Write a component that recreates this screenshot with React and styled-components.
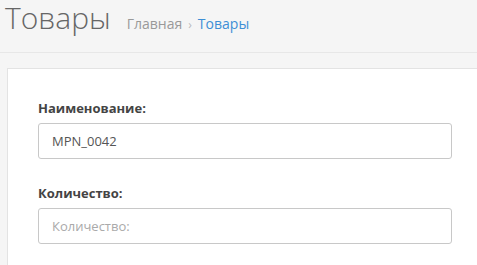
import React from "react";
import styled, { createGlobalStyle } from "styled-components";

const Global = createGlobalStyle`
  html, body { margin: 0; padding: 0; background: #f5f5f5; overflow: hidden; }
  body { font-family: "Open Sans", "Liberation Sans", sans-serif; color: #333; }
`;

const Page = styled.div`
  width: 477px;
  height: 265px;
  overflow: hidden;
`;

const Header = styled.div`
  display: flex;
  align-items: baseline;
  gap: 16px;
  height: 53px;
  box-sizing: border-box;
  padding: 0 0 0 5px;
  border-bottom: 1px solid #e7e7e7;
`;

const Title = styled.h1`
  margin: 0;
  font-size: 30px;
  font-weight: 300;
  line-height: 36px;
  color: #666;
`;

const Crumbs = styled.div`
  display: flex;
  align-items: baseline;
  gap: 6px;
  font-size: 14px;
  color: #999;
`;

const Crumb = styled.a`
  color: ${(p) => (p.$active ? "#3d8fd6" : "#999")};
  text-decoration: none;
`;

const Sep = styled.span`
  color: #bbb;
  font-size: 12px;
`;

const Content = styled.div`
  padding: 15px 0 0 7px;
`;

const Card = styled.div`
  width: 476px;
  box-sizing: border-box;
  background: #fff;
  border: 1px solid #e3e3e3;
  padding: 30px;
`;

const Group = styled.div`
  margin-bottom: 25px;
`;

const Label = styled.label`
  display: block;
  font-size: 13px;
  font-weight: 700;
  line-height: 18px;
  color: #444;
  margin-bottom: 6px;
`;

const Input = styled.input`
  display: block;
  width: 100%;
  height: 36px;
  box-sizing: border-box;
  border: 1px solid #c8c8c8;
  border-radius: 3px;
  padding: 0 13px;
  font-family: inherit;
  font-size: 13px;
  color: #555;
  background: #fff;
  outline: none;
  &::placeholder { color: #aaa; }
`;

export default function App() {
  return (
    <Page>
      <Global />
      <Header>
        <Title>Товары</Title>
        <Crumbs>
          <Crumb href="#">Главная</Crumb>
          <Sep>›</Sep>
          <Crumb $active href="#">Товары</Crumb>
        </Crumbs>
      </Header>
      <Content>
        <Card>
          <Group>
            <Label>Наименование:</Label>
            <Input defaultValue="MPN_0042" />
          </Group>
          <Group>
            <Label>Количество:</Label>
            <Input placeholder="Количество:" />
          </Group>
        </Card>
      </Content>
    </Page>
  );
}
